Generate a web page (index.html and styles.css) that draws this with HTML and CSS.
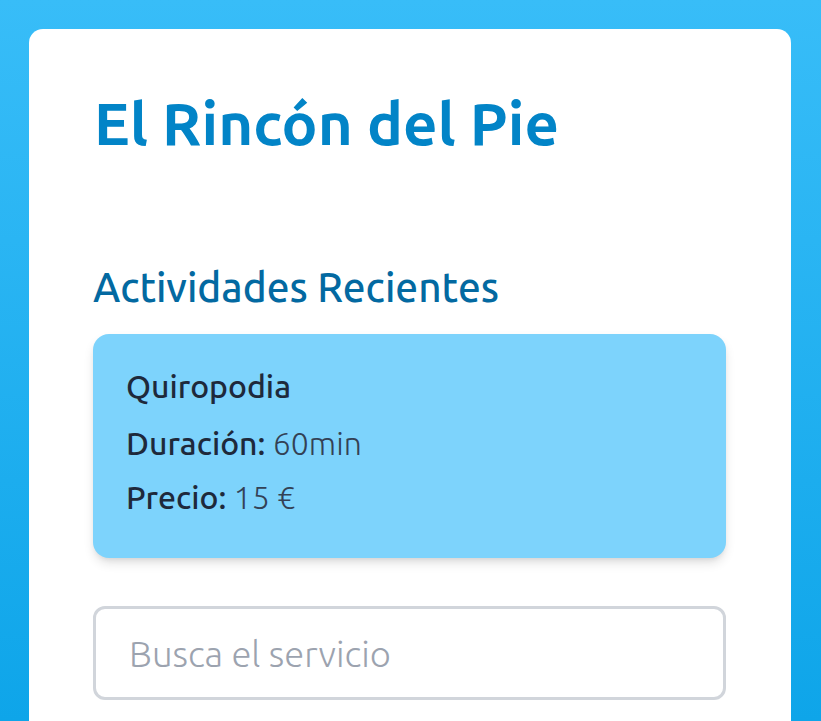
FILE: index.html
```html
<!DOCTYPE html>
<html lang="es">
<head>
  <meta charset="UTF-8">
  <title>El Rincón del Pie</title>
  <link rel="stylesheet" href="styles.css">
</head>
<body>

<div class="container">
  <h1 class="titulo">El Rincón del Pie</h1>

  <h2 class="subtitulo">Actividades Recientes</h2>

  <!-- Tarjeta de actividad -->
  <div class="actividad">
    <h3>Quiropodia</h3>
    <p><span class="etiqueta">Duración:</span> 60min</p>
    <p><span class="etiqueta">Precio:</span> 15 €</p>
  </div>

  <input type="text" class="buscador" placeholder="Busca el servicio">
</div>

</body>
</html>
```

FILE: styles.css
```css
* {
  box-sizing: border-box;
}

body {
  margin: 0;
  height: 100vh;
  padding: 29px 30px 0 29px;
  background: linear-gradient(to bottom, #38bdf8, #0ea5e9);
  font-family: "Ubuntu", "Noto Sans", "Open Sans", sans-serif;
  overflow: hidden;
}

.container {
  background: white;
  border-radius: 14px 14px 0 0;
  padding: 64px 65px 64px 64px;
  height: 100%;
}

.titulo {
  margin: 0 0 0 1px;
  font-size: 60px;
  line-height: 1;
  font-weight: 700;
  color: #0284c7;
}

.subtitulo {
  margin: 109px 0 22px;
  font-size: 40.6px;
  line-height: 50px;
  font-weight: 500;
  color: #0369a1;
}

.actividad {
  background: #7dd3fc;
  border-radius: 16px;
  padding: 32px 33px 41px;
  box-shadow: 0 6px 12px -2px rgba(0,0,0,0.14), 0 3px 6px -3px rgba(0,0,0,0.1);
}

.actividad h3 {
  margin: 0 0 17px;
  font-size: 32px;
  line-height: 40px;
  font-weight: 500;
  color: #1e293b;
}

.actividad p {
  margin: 14px 0 0;
  font-size: 32px;
  line-height: 40px;
  font-weight: 300;
  color: #334155;
}

.actividad h3 + p {
  margin-top: 0;
}

.etiqueta {
  font-weight: 500;
  color: #1e293b;
}

.buscador {
  display: block;
  width: 100%;
  margin-top: 48px;
  height: 94px;
  padding: 0 33px;
  border: 3px solid #d1d5db;
  border-radius: 12px;
  font-family: inherit;
  font-size: 36.4px;
  font-weight: 300;
  color: #334155;
  outline: none;
}

.buscador::placeholder {
  color: #9ca3af;
}
```
